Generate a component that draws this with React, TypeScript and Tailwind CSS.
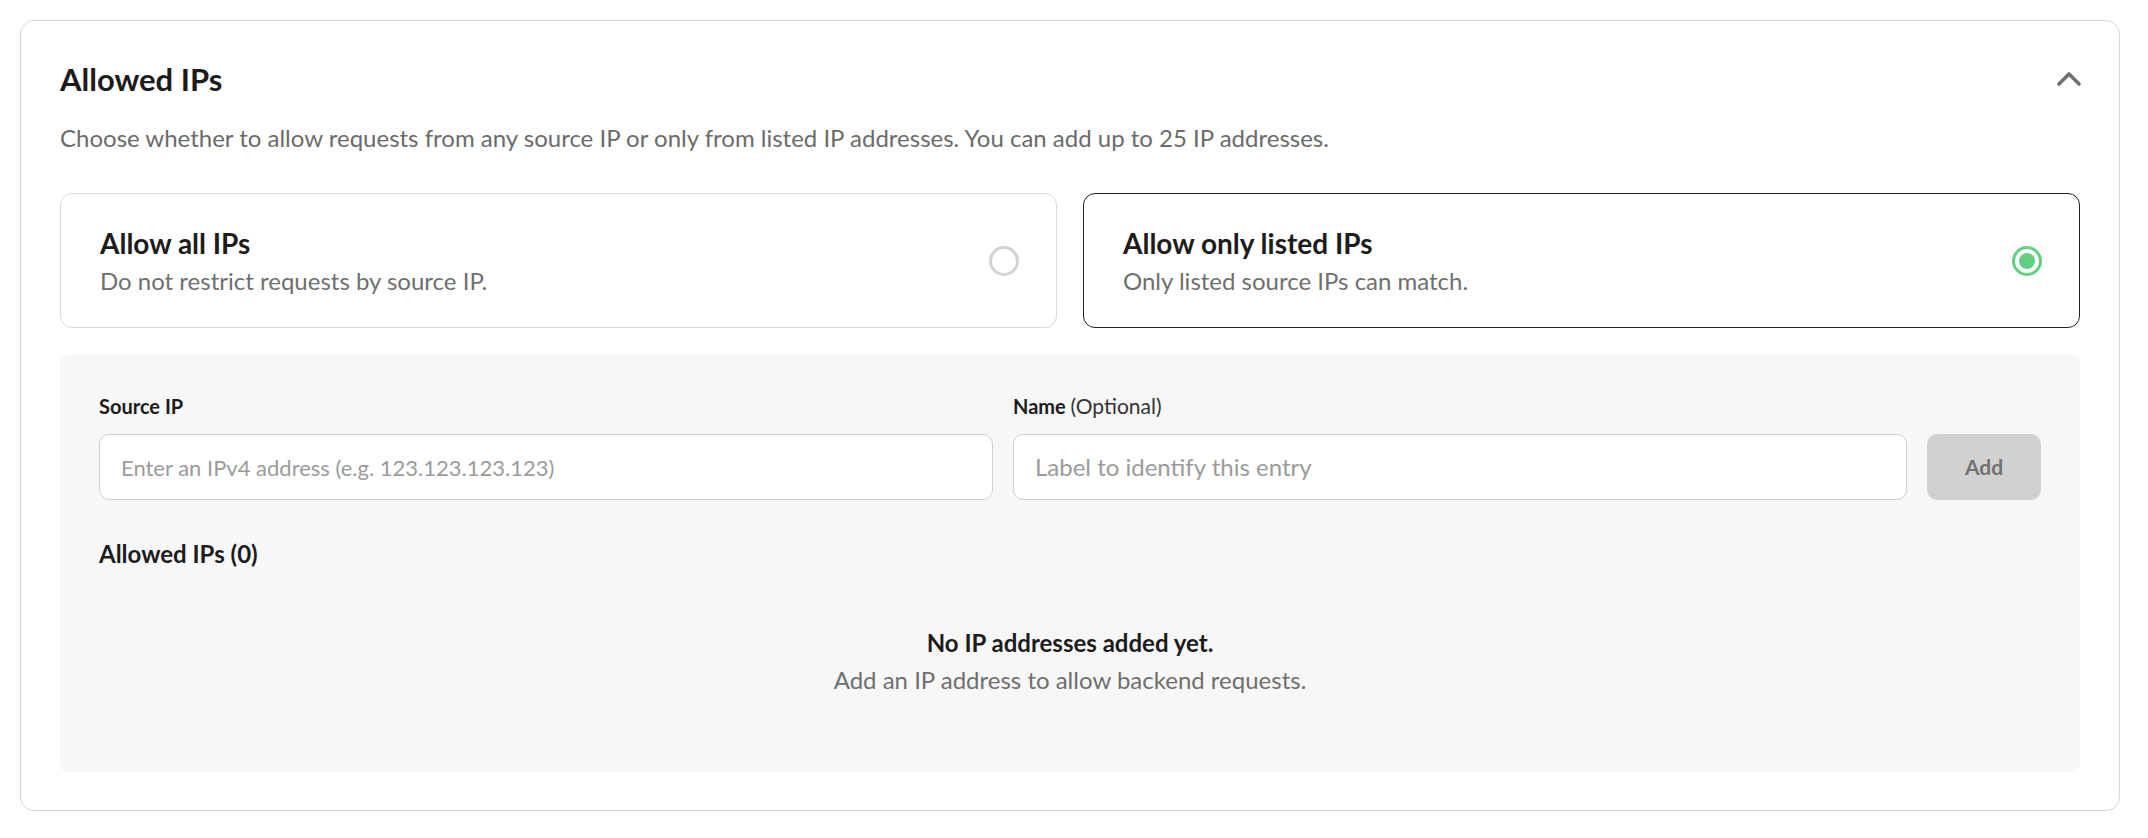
import React from 'react'

const RadioCard = ({ title, desc, selected }: { title: string; desc: string; selected?: boolean }) => {
    return (
        <div
            className={
                selected
                    ? 'flex items-center justify-between h-[135px] px-[39px] rounded-xl border border-[#222222] bg-white'
                    : 'flex items-center justify-between h-[135px] px-[39px] rounded-xl border border-[#d9d9d9] bg-white'
            }
        >
            <div className="flex flex-col">
                <span className="text-[28px] leading-[34px] font-bold text-[#1c1c1c]">{title}</span>
                <span className="text-[24px] leading-[30px] mt-[6px] text-[#6f6f6f]">{desc}</span>
            </div>
            {selected ? (
                <div className="w-[30px] h-[30px] rounded-full border-[3px] border-[#62cf84] flex items-center justify-center mr-[-2px]">
                    <div className="w-[16px] h-[16px] rounded-full bg-[#62cf84]" />
                </div>
            ) : (
                <div className="w-[30px] h-[30px] rounded-full border-[3px] border-[#d3d3d3] mr-[-2px]" />
            )}
        </div>
    )
}

const App = () => {
    return (
        <div className="min-h-screen bg-white pt-[20px] pl-[20px] font-['Lato',sans-serif]">
            <div className="w-[2100px] rounded-[14px] border border-[#d6d6d6] px-[39px] pt-[40px] pb-[38px]">
                <div className="flex items-center justify-between h-[36px]">
                    <h2 className="text-[31px] leading-[36px] font-bold text-[#1c1c1c]">Allowed IPs</h2>
                    <svg width="26" height="16" viewBox="0 0 26 16" fill="none" className="mr-[-2px]">
                        <path d="M3 13 L13 3 L23 13" stroke="#707070" strokeWidth="3.6" strokeLinecap="round" strokeLinejoin="round" />
                    </svg>
                </div>
                <p className="mt-[26px] text-[24px] leading-[30px] text-[#6b6b6b]">
                    Choose whether to allow requests from any source IP or only from listed IP addresses. You can add up to 25 IP addresses.
                </p>

                <div className="grid grid-cols-2 gap-[26px] mt-[40px]">
                    <RadioCard title="Allow all IPs" desc="Do not restrict requests by source IP." />
                    <RadioCard title="Allow only listed IPs" desc="Only listed source IPs can match." selected />
                </div>

                <div className="mt-[27px] rounded-lg bg-[#f7f7f7] px-[39px] pt-[39px] pb-[42px]">
                    <div className="grid grid-cols-[1fr_1fr_114px] gap-x-[20px] gap-y-[16px] items-end">
                        <label className="text-[20px] leading-[24px] font-bold text-[#1c1c1c]">Source IP</label>
                        <label className="text-[20px] leading-[24px] font-bold text-[#1c1c1c]">
                            Name <span className="font-normal text-[21px] text-[#333333]">(Optional)</span>
                        </label>
                        <div />
                        <div className="h-[66px] rounded-[10px] border border-[#cfcfcf] bg-white flex items-center px-[21px]">
                            <span className="text-[22px] text-[#9b9b9b]">Enter an IPv4 address (e.g. 123.123.123.123)</span>
                        </div>
                        <div className="h-[66px] rounded-[10px] border border-[#cfcfcf] bg-white flex items-center px-[21px]">
                            <span className="text-[24px] text-[#9b9b9b]">Label to identify this entry</span>
                        </div>
                        <button className="h-[66px] rounded-[10px] bg-[#d1d1d1] text-[21px] font-bold text-[#727272]">Add</button>
                    </div>

                    <h3 className="mt-[39px] text-[24px] leading-[30px] font-bold text-[#1c1c1c]">Allowed IPs (0)</h3>

                    <div className="flex flex-col items-center mt-[59px] mb-[35px]">
                        <span className="text-[24px] leading-[30px] font-bold text-[#1c1c1c]">No IP addresses added yet.</span>
                        <span className="mt-[7px] text-[24px] leading-[30px] text-[#6f6f6f]">Add an IP address to allow backend requests.</span>
                    </div>
                </div>
            </div>
        </div>
    )
}

export default App
